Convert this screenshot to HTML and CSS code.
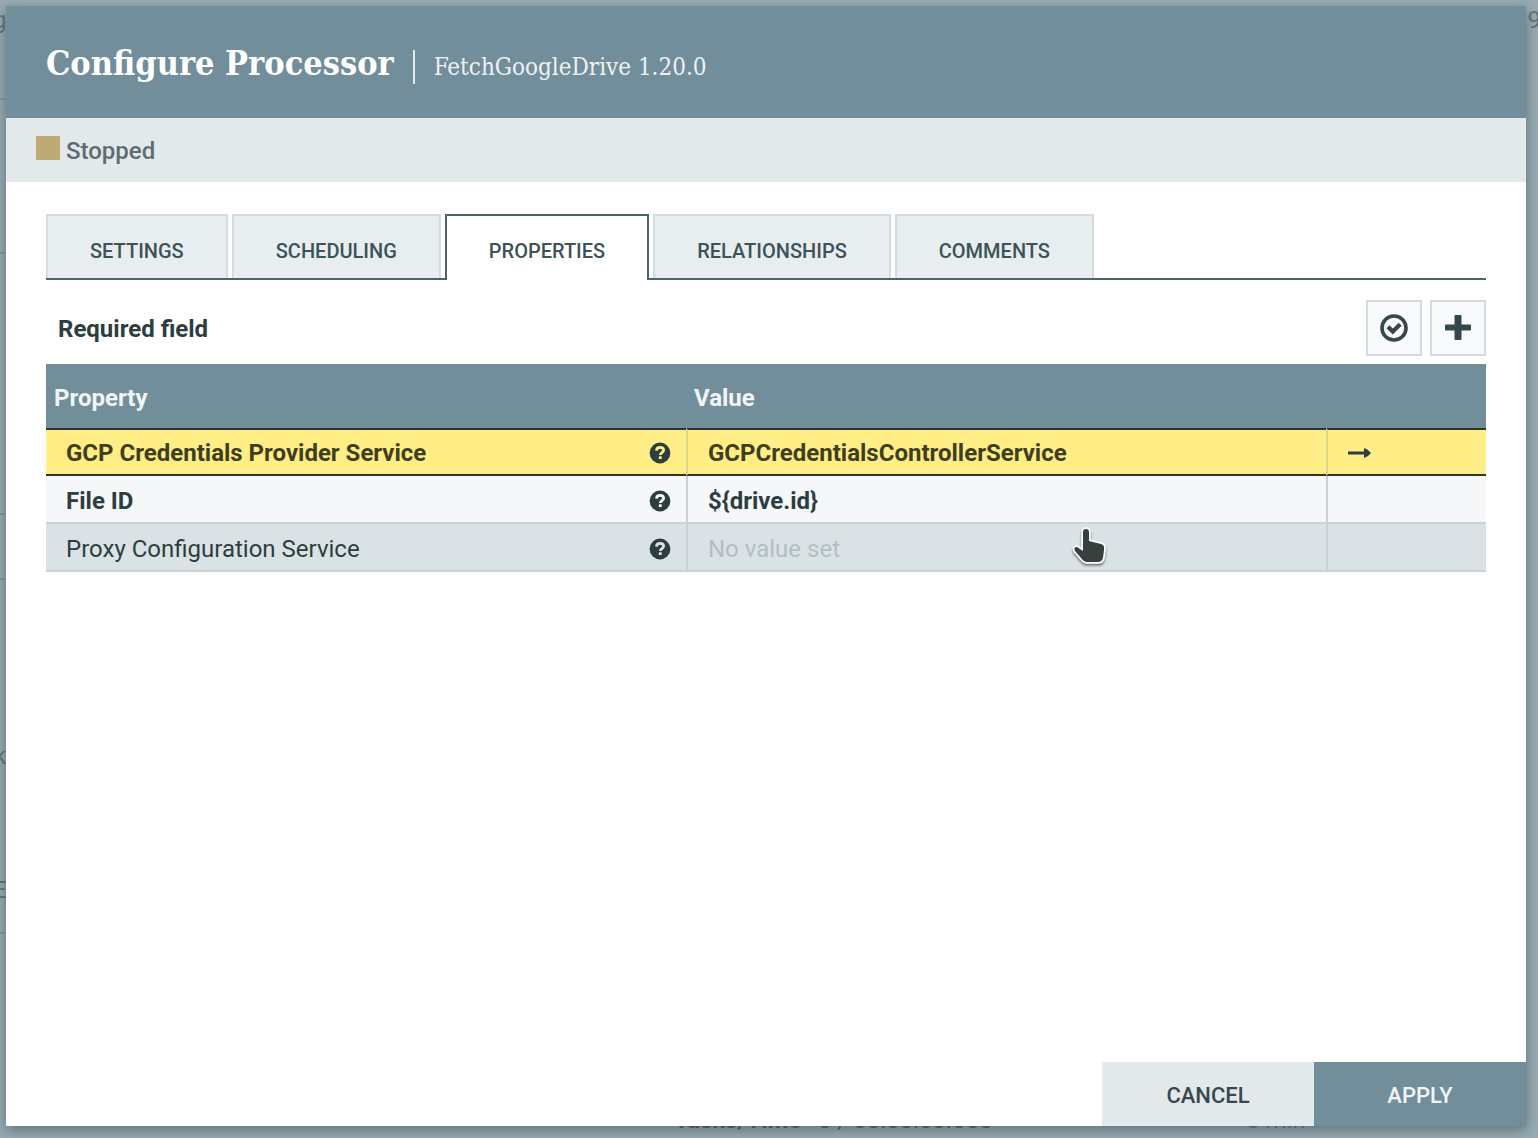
FILE: index.html
```html
<!DOCTYPE html>
<html lang="en">
<head>
<meta charset="utf-8">
<title>Configure Processor</title>
<link rel="stylesheet" href="styles.css">
</head>
<body>
<svg class="defs" aria-hidden="true">
  <symbol id="help" viewBox="0 0 22 22">
    <circle cx="11" cy="11" r="10.400" fill="currentColor"/>
    <path d="M7.400 8.600C7.700 6.500 9.200 5.400 11 5.400c2.100 0 3.600 1.200 3.600 2.900 0 2.300-3.300 2.300-3.300 4.700" fill="none" stroke="var(--mark)" stroke-width="2.800"/>
    <path d="M9.800 14.300h2.900v2.700H9.800z" fill="var(--mark)"/>
  </symbol>
</svg>
<div class="canvas" aria-hidden="true">
  <span class="peek peek-a">g</span>
  <span class="peek peek-b">9</span>
  <span class="peek peek-c">k</span>
  <span class="peek peek-d">E</span>
  <span class="peek peek-e">Tasks/Time</span>
  <span class="peek peek-f">0 / 00:00:00.000</span>
  <span class="peek peek-g">5 min</span>
  <i class="rule rule-a"></i><i class="rule rule-b"></i><i class="rule rule-c"></i><i class="rule rule-d"></i><i class="rule rule-e"></i>
</div>
<main class="dialog" role="dialog" aria-labelledby="title">
  <header class="head">
    <h1 id="title">Configure Processor</h1>
    <span class="divider"></span>
    <p class="kind">FetchGoogleDrive 1.20.0</p>
  </header>
  <div class="status"><span class="square"></span>Stopped</div>
  <section class="content">
    <div class="tabs" role="tablist">
      <button class="tab" role="tab">SETTINGS</button>
      <button class="tab" role="tab">SCHEDULING</button>
      <button class="tab active" role="tab" aria-selected="true">PROPERTIES</button>
      <button class="tab" role="tab">RELATIONSHIPS</button>
      <button class="tab" role="tab">COMMENTS</button>
    </div>
    <div class="toolbar">
      <p class="required">Required field</p>
      <button class="tool" aria-label="Verify properties">
        <svg width="28" height="28" viewBox="0 0 28 28" fill="none" stroke="currentColor"><circle cx="14" cy="14" r="12" stroke-width="3.600"/><path d="M8 12.800l4.800 4.800 7.400-7.400" stroke-width="4.200"/></svg>
      </button>
      <button class="tool" aria-label="Add property">
        <svg width="28" height="28" viewBox="0 0 28 28" fill="currentColor"><path d="M11.500 1h5q1 0 1 1v8.500H26q1 0 1 1v4q0 1-1 1h-8.500V25q0 1-1 1h-5q-1 0-1-1v-8.500H2q-1 0-1-1v-4q0-1 1-1h8.500V2q0-1 1-1z"/></svg>
      </button>
    </div>
    <table class="grid">
      <thead>
        <tr><th class="name">Property</th><th class="value">Value</th><th class="go"></th></tr>
      </thead>
      <tbody>
        <tr class="selected">
          <td><div class="prop"><b>GCP Credentials Provider Service</b><svg class="help" width="22" height="22"><use href="#help"/></svg></div></td>
          <td><b>GCPCredentialsControllerService</b></td>
          <td><svg class="arrow" width="24" height="14" viewBox="0 0 24 14" fill="currentColor"><path d="M0 5.500h16V2q4 1 7 5-3 4-7 5V8.500H0z"/></svg></td>
        </tr>
        <tr class="odd">
          <td><div class="prop"><b>File ID</b><svg class="help" width="22" height="22"><use href="#help"/></svg></div></td>
          <td><b>${drive.id}</b></td>
          <td></td>
        </tr>
        <tr class="even">
          <td><div class="prop">Proxy Configuration Service<svg class="help" width="22" height="22"><use href="#help"/></svg></div></td>
          <td class="unset">No value set</td>
          <td></td>
        </tr>
      </tbody>
    </table>
  </section>
  <footer class="foot">
    <button class="action">CANCEL</button>
    <button class="action primary">APPLY</button>
  </footer>
</main>
<svg class="cursor" width="36" height="42" viewBox="0 0 36 42" aria-hidden="true">
  <path d="M11 6Q11 3 14 3T17 6V15L29 18Q33 19 32 24L31 32Q30 36 26 36H15Q12 36 9 32L3 25Q1 21 5 21L11 25Z" fill="#37403e" stroke="#fff" stroke-width="3.500" stroke-linejoin="round" paint-order="stroke"/>
</svg>
</body>
</html>
```
FILE: styles.css
```css
* { box-sizing: border-box; }
body {
  margin: 0;
  min-height: 100vh;
  padding: 6px 12px 12px 6px;
  display: flex;
  background: #97abb3;
  color: #2c3e40;
  font: 24px/32px Roboto, "Liberation Sans", sans-serif;
  overflow: hidden;
}
h1, p { margin: 0; }
button { font: inherit; color: inherit; border: 0; padding: 0; border-radius: 0; }
b { font-weight: 700; }
.defs { position: absolute; width: 0; height: 0; }

/* flow canvas showing round the dialog */
.canvas { position: absolute; inset: 0; overflow: hidden; color: #61737a; }
.peek { position: absolute; white-space: nowrap; }
.peek-a { left: -7px; top: 4px; }
.peek-b { right: -3px; top: 4px; }
.peek-c { left: -6px; top: 740px; }
.peek-d { left: -7px; top: 874px; }
.peek-e { left: 674px; bottom: 2px; font-weight: 700; color: #4c5b60; }
.peek-f { left: 818px; bottom: 2px; color: #4c5b60; }
.peek-g { left: 1246px; bottom: 2px; }
.rule { position: absolute; left: 0; width: 6px; height: 2px; background: #82969e; }
.rule-a { top: 98px; }
.rule-b { top: 252px; }
.rule-c { top: 513px; }
.rule-d { top: 578px; }
.rule-e { top: 932px; }

.dialog {
  position: relative;
  flex: 1;
  display: flex;
  flex-direction: column;
  background: #fff;
  box-shadow: 0 4px 12px rgba(60, 75, 80, .6);
}
.head {
  display: flex;
  align-items: center;
  gap: 19px;
  height: 112px;
  padding: 2px 40px 0;
  background: #728e9b;
  color: #fff;
  font-family: "Roboto Slab", "DejaVu Serif Condensed", "DejaVu Serif", serif;
}
.head h1 { font-size: 34px; line-height: 40px; font-weight: 700; }
.divider { width: 2px; height: 34px; margin-top: 8px; background: #e3e8eb; }
.kind { font-size: 24px; padding-top: 8px; color: #eef2f4; }
.status {
  display: flex;
  align-items: center;
  gap: 6px;
  height: 64px;
  padding: 2px 30px 0;
  background: #e3e8eb;
  color: #5c6d72;
  font-weight: 500;
}
.square { width: 24px; height: 24px; margin-bottom: 6px; background: #bcab73; }

.content { flex: 1; padding: 32px 40px 0; }
.tabs { display: flex; gap: 4px; border-bottom: 2px solid #4a6469; }
.tab {
  height: 64px;
  padding: 8px 42px 0;
  border: 2px solid #d3dcdf;
  border-bottom: 0;
  background: #e8edf0;
  color: #3c5357;
  font-size: 20px;
  font-weight: 500;
}
.tab.active {
  height: 66px;
  margin-bottom: -2px;
  padding-bottom: 2px;
  border-color: #4a6469;
  background: #fff;
}
.toolbar { display: flex; align-items: center; gap: 8px; padding: 20px 0 8px; }
.required { flex: 1; padding: 2px 12px 0; font-weight: 700; }
.tool {
  display: grid;
  place-items: center;
  width: 56px;
  height: 56px;
  border: 2px solid #d3dcdf;
  background: #f9fafb;
  color: #34474a;
}

.grid { width: 100%; table-layout: fixed; border-collapse: separate; border-spacing: 0; }
.grid th {
  height: 64px;
  padding: 4px 8px 0;
  background: #728e9b;
  color: #f2f5f6;
  text-align: left;
  font-weight: 700;
}
.name, .value { width: 640px; }
.grid td {
  height: 48px;
  padding: 4px 15px 0 20px;
  border-left: 2px solid #c9d3d7;
  border-bottom: 2px solid #c9d3d7;
}
.grid td:first-child { border-left: 0; }
.prop { display: flex; align-items: center; justify-content: space-between; }
.odd { background: #f5f7f9; --mark: #f5f7f9; }
.even { background: #dbe2e5; --mark: #dbe2e5; }
.selected { background: #feee85; --mark: #feee85; }
.grid .selected td {
  padding-top: 2px;
  border-top: 2px solid #30362c;
  border-bottom-color: #30362c;
  border-left-color: #dcd38c;
}
.selected b { color: #403e20; }
.arrow { display: block; }
.unset { color: #b2bfc2; }

.foot { display: flex; justify-content: flex-end; }
.action {
  width: 212px;
  height: 64px;
  padding-top: 4px;
  background: #e3e8eb;
  color: #37494d;
  font-size: 22px;
  font-weight: 500;
}
.action.primary { background: #728e9b; color: #f2f5f6; }

.cursor { position: absolute; left: 1072px; top: 526px; filter: drop-shadow(0 2px 1px rgba(40, 50, 55, .6)); }
```
